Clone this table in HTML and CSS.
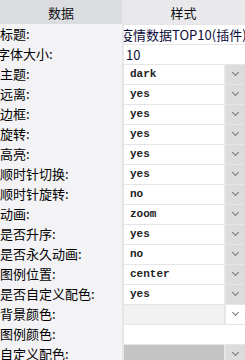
FILE: index.html
```html
<!DOCTYPE html>
<html lang="zh">
  <head>
    <meta charset="UTF-8" />
    <title>属性</title>
    <link rel="stylesheet" href="styles.css">
  </head>
  <body>
    <div class="grid">
      <div class="head head-data">数据</div>
      <div class="head head-style">样式</div>

      <div class="label">标题:</div>
      <div class="cell"><input class="text clip" type="text" value="疫情数据TOP10(插件)" /></div>

      <div class="label clip">字体大小:</div>
      <div class="cell"><input class="text" type="text" value="10" /></div>

      <div class="label">主题:</div>
      <div class="cell"><div class="select"><span class="val">dark</span><span class="arrow"></span></div></div>

      <div class="label">远离:</div>
      <div class="cell"><div class="select"><span class="val">yes</span><span class="arrow"></span></div></div>

      <div class="label">边框:</div>
      <div class="cell"><div class="select"><span class="val">yes</span><span class="arrow"></span></div></div>

      <div class="label">旋转:</div>
      <div class="cell"><div class="select"><span class="val">yes</span><span class="arrow"></span></div></div>

      <div class="label">高亮:</div>
      <div class="cell"><div class="select"><span class="val">yes</span><span class="arrow"></span></div></div>

      <div class="label">顺时针切换:</div>
      <div class="cell"><div class="select"><span class="val">yes</span><span class="arrow"></span></div></div>

      <div class="label">顺时针旋转:</div>
      <div class="cell"><div class="select"><span class="val">no</span><span class="arrow"></span></div></div>

      <div class="label">动画:</div>
      <div class="cell"><div class="select"><span class="val">zoom</span><span class="arrow"></span></div></div>

      <div class="label">是否升序:</div>
      <div class="cell"><div class="select"><span class="val">yes</span><span class="arrow"></span></div></div>

      <div class="label">是否永久动画:</div>
      <div class="cell"><div class="select"><span class="val">no</span><span class="arrow"></span></div></div>

      <div class="label">图例位置:</div>
      <div class="cell"><div class="select"><span class="val">center</span><span class="arrow"></span></div></div>

      <div class="label">是否自定义配色:</div>
      <div class="cell"><div class="select"><span class="val">yes</span><span class="arrow"></span></div></div>

      <div class="label">背景颜色:</div>
      <div class="cell"><div class="select off"><span class="val"></span><span class="arrow"></span></div></div>

      <div class="label">图例颜色:</div>
      <div class="cell"><input class="text" type="text" value="" /></div>

      <div class="label">自定义配色:</div>
      <div class="cell"><div class="select dim"><span class="val"></span><span class="arrow"></span></div></div>
    </div>
  </body>
</html>
```

FILE: styles.css
```css
body {
  margin: 0;
  width: 245px;
  height: 360px;
  overflow: hidden;
  background: #f3f3f5;
  font-family: "Noto Sans CJK SC", "Liberation Sans", sans-serif;
  font-size: 13px;
  color: #000;
}

.grid {
  display: grid;
  grid-template-columns: 122px 123px;
  grid-auto-rows: 20px;
  grid-template-rows: 24px;
}

.head {
  display: flex;
  align-items: center;
  justify-content: center;
  font-size: 13px;
  color: #111;
}

.head-data {
  background: #dcdde0;
}

.head-style {
  background: #e9e9eb;
}

.label {
  display: flex;
  align-items: center;
  white-space: nowrap;
  overflow: hidden;
  line-height: 20px;
}

.label.clip {
  text-indent: -3px;
}

.cell {
  background: #e6e6e8;
  padding: 1px 0 0 2px;
  display: flex;
}

.text {
  flex: 1;
  min-width: 0;
  height: 19px;
  box-sizing: border-box;
  border: 0;
  margin: 0;
  padding: 0 0 0 2px;
  background: #fff;
  font-family: "Noto Sans CJK SC", "Liberation Sans", sans-serif;
  font-size: 13px;
  color: #0c0c3a;
  outline: none;
}

.text.clip {
  text-indent: -4px;
  padding: 0;
}

.select {
  flex: 1;
  display: flex;
  height: 19px;
}

.val {
  flex: 1;
  background: #fff;
  font-family: "Liberation Mono", monospace;
  font-size: 11px;
  font-weight: bold;
  line-height: 19px;
  padding-left: 6px;
  color: #222;
}

.arrow {
  width: 19px;
  margin-left: 2px;
  background: #dcdcdc;
  position: relative;
}

/* small chevron drawn from two borders */
.arrow::after {
  content: "";
  position: absolute;
  left: 7px;
  top: 5px;
  width: 4px;
  height: 4px;
  border-right: 1px solid #777;
  border-bottom: 1px solid #777;
  transform: rotate(45deg);
}

.off .val {
  background: #f2f2f3;
}

.off .arrow {
  background: #fff;
}

.dim .val {
  background: #c4c4c4;
}
```
